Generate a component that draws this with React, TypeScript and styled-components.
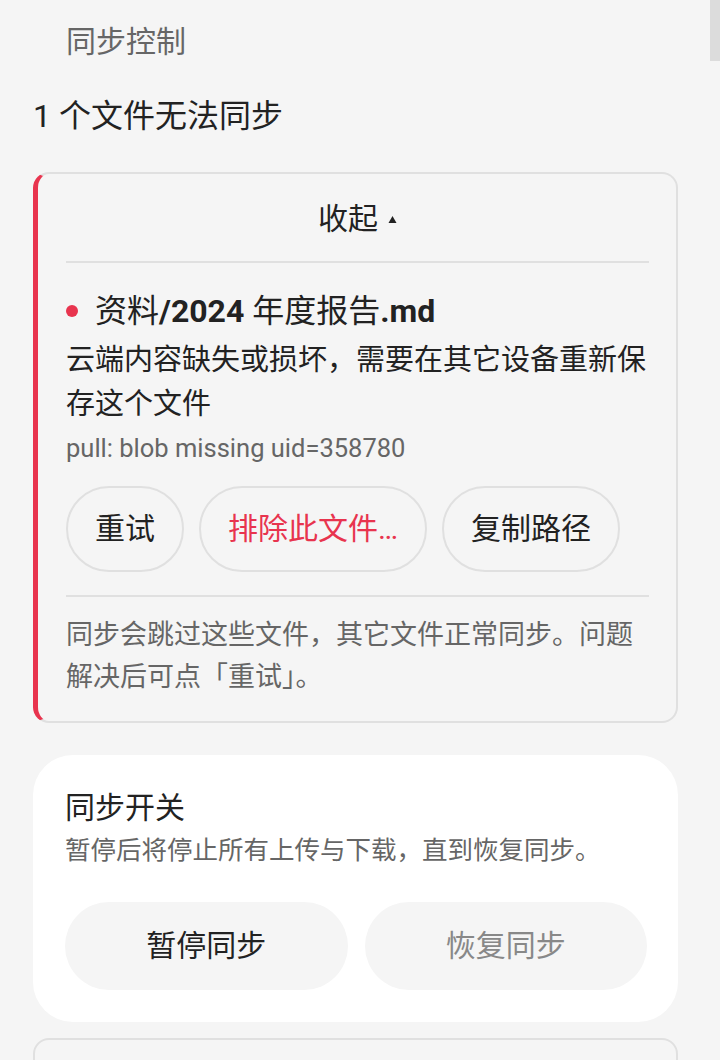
import React from 'react'
import styled, { createGlobalStyle } from 'styled-components'

const GlobalStyle = createGlobalStyle`
  html, body {
    margin: 0;
    padding: 0;
    background: #f5f5f5;
  }
  body {
    font-family: Roboto, "Noto Sans CJK SC", sans-serif;
    color: #222;
    -webkit-font-smoothing: antialiased;
  }
`

const Page = styled.div`
  display: flex;
  flex-direction: column;
  padding: 22px 42px 0 33px;
  min-height: 1060px;
  box-sizing: border-box;
`

const ScrollThumb = styled.div`
  position: fixed;
  top: 0;
  right: 0;
  width: 10px;
  height: 61px;
  background: #dcdcdc;
`

const SectionLabel = styled.div`
  padding-left: 33px;
  font-size: 30px;
  line-height: 40px;
  color: #666;
`

const IssueTitle = styled.div`
  margin-top: 32px;
  font-size: 32px;
  line-height: 44px;
  color: #222;
`

const IssueCard = styled.div`
  margin-top: 34px;
  display: flex;
  flex-direction: column;
  padding: 0 27px 23px 28px;
  border: 2px solid #e0e0e0;
  border-left: 5px solid #e8344e;
  border-radius: 16px;
  background: #f5f5f5;
`

const CollapseToggle = styled.div`
  display: flex;
  justify-content: center;
  align-items: center;
  gap: 10px;
  padding: 23px 0 20px;
  font-size: 30px;
  line-height: 44px;
  color: #222;
  cursor: pointer;
`

const Divider = styled.div<{ $mt?: number }>`
  height: 2px;
  background: #e0e0e0;
  margin-top: ${(p) => p.$mt ?? 0}px;
`

const FileRow = styled.div`
  margin-top: 26px;
  display: flex;
  align-items: center;
  gap: 17px;
`

const Dot = styled.span`
  width: 12px;
  height: 12px;
  border-radius: 50%;
  background: #e8344e;
  flex-shrink: 0;
`

const FileName = styled.div`
  font-size: 32px;
  line-height: 44px;
  color: #222;

  b {
    font-weight: 700;
  }
`

const Reason = styled.div`
  margin-top: 5px;
  font-size: 29px;
  line-height: 44px;
  color: #222;
`

const ErrorCode = styled.div`
  margin-top: 5px;
  font-size: 25.5px;
  line-height: 34px;
  color: #666;
`

const ActionRow = styled.div`
  margin-top: 21px;
  display: flex;
  gap: 15px;
`

const OutlineButton = styled.button<{ $danger?: boolean }>`
  font-family: inherit;
  font-size: 30px;
  line-height: 42px;
  padding: 20px 27px;
  border: 2px solid #e0e0e0;
  border-radius: 999px;
  background: transparent;
  color: ${(p) => (p.$danger ? '#e8344e' : '#222')};
  cursor: pointer;
`

const Hint = styled.div`
  margin-top: 17px;
  font-size: 27px;
  line-height: 42px;
  color: #666;
`

const ControlCard = styled.div`
  margin-top: 32px;
  display: flex;
  flex-direction: column;
  padding: 31px 31px 32px 32px;
  border-radius: 40px;
  background: #fff;
`

const CardTitle = styled.div`
  font-size: 30px;
  line-height: 44px;
  color: #222;
`

const CardSubtitle = styled.div`
  margin-top: 1px;
  font-size: 25.5px;
  line-height: 38px;
  color: #666;
`

const ButtonPair = styled.div`
  margin-top: 33px;
  display: flex;
  gap: 17px;
`

const FillButton = styled.button<{ $disabled?: boolean }>`
  flex: 1;
  font-family: inherit;
  font-size: 30px;
  line-height: 44px;
  padding: 22px 0;
  border: none;
  border-radius: 999px;
  background: #f5f5f5;
  color: ${(p) => (p.$disabled ? '#888' : '#222')};
  cursor: ${(p) => (p.$disabled ? 'default' : 'pointer')};
`

const NextCard = styled.div`
  margin-top: 16px;
  height: 80px;
  border: 2px solid #e0e0e0;
  border-radius: 16px;
`

const Caret = () => (
  <svg width="9" height="9" viewBox="0 0 9 9" aria-hidden>
    <path d="M4.5 1 L8.5 8 L0.5 8 Z" fill="#222" />
  </svg>
)

export default function App() {
  return (
    <>
      <GlobalStyle />
      <ScrollThumb />
      <Page>
        <SectionLabel>同步控制</SectionLabel>
        <IssueTitle>1 个文件无法同步</IssueTitle>

        <IssueCard>
          <CollapseToggle>
            收起
            <Caret />
          </CollapseToggle>
          <Divider />
          <FileRow>
            <Dot />
            <FileName>
              资料<b>/2024</b> 年度报告<b>.md</b>
            </FileName>
          </FileRow>
          <Reason>云端内容缺失或损坏，需要在其它设备重新保存这个文件</Reason>
          <ErrorCode>pull: blob missing uid=358780</ErrorCode>
          <ActionRow>
            <OutlineButton>重试</OutlineButton>
            <OutlineButton $danger>排除此文件…</OutlineButton>
            <OutlineButton>复制路径</OutlineButton>
          </ActionRow>
          <Divider $mt={23} />
          <Hint>同步会跳过这些文件，其它文件正常同步。问题解决后可点「重试」。</Hint>
        </IssueCard>

        <ControlCard>
          <CardTitle>同步开关</CardTitle>
          <CardSubtitle>暂停后将停止所有上传与下载，直到恢复同步。</CardSubtitle>
          <ButtonPair>
            <FillButton>暂停同步</FillButton>
            <FillButton $disabled>恢复同步</FillButton>
          </ButtonPair>
        </ControlCard>

        <NextCard />
      </Page>
    </>
  )
}
